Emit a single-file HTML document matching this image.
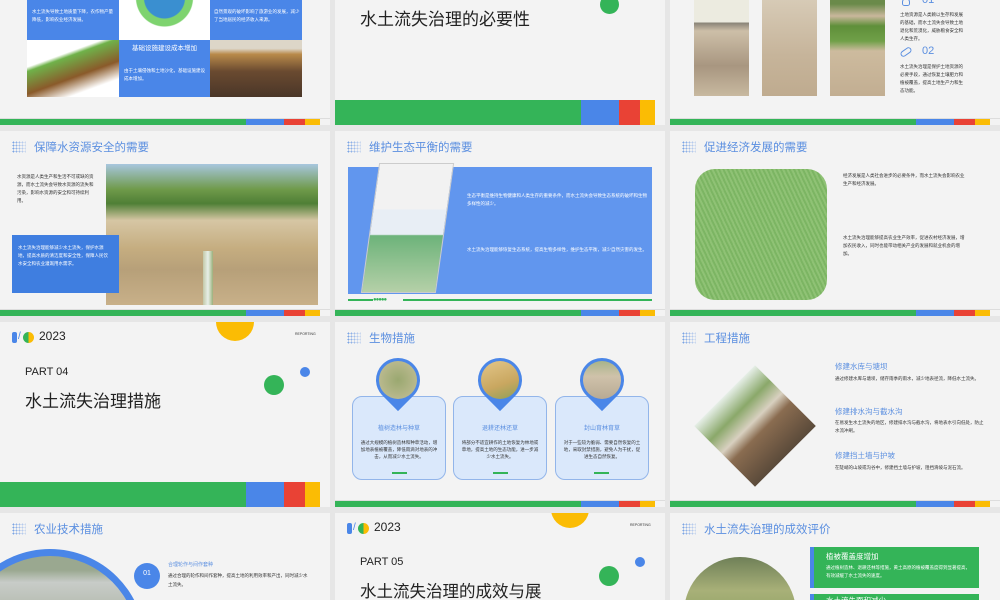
<!DOCTYPE html>
<html style="overflow:hidden;width:1000px;height:600px"><head><meta charset="utf-8"><style>
*{margin:0;padding:0;box-sizing:border-box}
body{width:1000px;height:600px;overflow:hidden;background:#e6e6e6;position:relative;font-family:"Liberation Sans","Noto Sans CJK SC",sans-serif}
.s{position:absolute;width:330px;height:185px;background:#f3f3f3;overflow:hidden}
.a{position:absolute}
.bar{position:absolute;left:0;bottom:0;width:330px;height:7px;border-top:1px solid #ddd}
.bar i{position:absolute;top:0;bottom:0}
.g{background:#34b458}.b{background:#4a86e8}.r{background:#e94235}.y{background:#fbbc04}
.thick{height:25px;border:0}
.hd{position:absolute;left:12px;top:9px;height:14px;display:flex;align-items:center}
.dots{width:14px;height:12px;background-image:radial-gradient(circle,#5b8fe0 45%,transparent 50%);background-size:3px 3px;opacity:.85;-webkit-mask:linear-gradient(90deg,#000,rgba(0,0,0,.3))}
.hd span{margin-left:8px;color:#5b8fe0;font-size:11.5px}
.t{font-size:4.5px;line-height:8px;color:#333}
.w{color:#fff}
</style></head><body>

<!-- Row1 col1 -->
<div class="s" style="left:0;top:-60px">
 <div class="a b" style="left:27px;top:40px;width:92px;height:60px"></div>
 <div class="a t w" style="left:32px;top:68px;width:84px">水土流失导致土地质量下降，农作物产量降低，影响农业经济发展。</div>
 <div class="a" style="left:119px;top:40px;width:91px;height:60px;background:radial-gradient(circle at 50% 30%,#3a8fd0 0 20px,#7ed36f 21px 28px,#fff 29px)"></div>
 <div class="a b" style="left:210px;top:40px;width:92px;height:60px"></div>
 <div class="a t w" style="left:214px;top:68px;width:86px">自然景观的破坏影响了旅游业的发展，减少了当地居民的经济收入来源。</div>
 <div class="a" style="left:27px;top:100px;width:92px;height:57px;background:linear-gradient(160deg,#fff 30%,#6fb24a 35%,#8a5a2a 60%,#fff 80%)"></div>
 <div class="a b" style="left:119px;top:100px;width:91px;height:57px"></div>
 <div class="a w" style="left:119px;top:102px;width:91px;text-align:center;font-size:6.5px">基础设施建设成本增加</div>
 <div class="a t w" style="left:124px;top:127px;width:84px">由于土壤侵蚀和土地沙化，基础设施建设成本增加。</div>
 <div class="a" style="left:210px;top:100px;width:92px;height:57px;background:linear-gradient(180deg,#ddd6c8 0 15%,#b98a4a 25%,#6a4a30 55%,#4a3628)"></div>
 <div class="bar"><i class="g" style="left:0;width:246px"></i><i class="b" style="left:246px;width:38px"></i><i class="r" style="left:284px;width:21px"></i><i class="y" style="left:305px;width:15px"></i></div>
</div>

<!-- Row1 col2 -->
<div class="s" style="left:335px;top:-60px">
 <div class="a" style="left:25px;top:65px;font-size:17px;color:#222">水土流失治理的必要性</div>
 <div class="a g" style="left:265px;top:55px;width:19px;height:19px;border-radius:50%"></div>
 <div class="bar thick"><i class="g" style="left:0;width:246px"></i><i class="b" style="left:246px;width:38px"></i><i class="r" style="left:284px;width:21px"></i><i class="y" style="left:305px;width:15px"></i></div>
</div>

<!-- Row1 col3 -->
<div class="s" style="left:670px;top:-60px">
 <div class="a" style="left:24px;top:56px;width:55px;height:100px;background:linear-gradient(180deg,#ecebe0 0 26%,#8a8478 27%,#cdbfa8 35%,#a89680 70%,#c8b9a0)"></div>
 <div class="a" style="left:92px;top:56px;width:55px;height:100px;background:linear-gradient(180deg,#d8ccb8,#c6b49a 60%,#bfab8f)"></div>
 <div class="a" style="left:160px;top:56px;width:55px;height:100px;background:linear-gradient(180deg,#6a8a4a 0 8%,#c9b79c 20%,#5f8f3a 30%,#70a048 45%,#cdbb9e 55%,#c2ae92)"></div>
 <div class="a" style="left:232px;top:58px;width:8px;height:8px;border:1.5px solid #5b8fe0;border-radius:50% 50% 30% 30%"></div>
 <div class="a" style="left:252px;top:54px;font-size:11px;color:#5b8fe0">01</div>
 <div class="a t" style="left:230px;top:71px;width:66px">土地资源是人类赖以生存和发展的基础，而水土流失会导致土地退化和荒漠化，威胁粮食安全和人类生存。</div>
 <div class="a" style="left:230px;top:109px;width:12px;height:6px;border:1.5px solid #5b8fe0;border-radius:3px;transform:rotate(-35deg)"></div>
 <div class="a" style="left:252px;top:105px;font-size:11px;color:#5b8fe0">02</div>
 <div class="a t" style="left:230px;top:123px;width:66px">水土流失治理是保护土地资源的必要手段，通过恢复土壤肥力和植被覆盖，提高土地生产力和生态功能。</div>
 <div class="bar"><i class="g" style="left:0;width:246px"></i><i class="b" style="left:246px;width:38px"></i><i class="r" style="left:284px;width:21px"></i><i class="y" style="left:305px;width:15px"></i></div>
</div>

<!-- Row2 col1 -->
<div class="s" style="left:0;top:131px">
 <div class="hd"><div class="dots"></div><span>保障水资源安全的需要</span></div>
 <div class="a t" style="left:17px;top:42px;width:77px">水资源是人类生产和生活不可或缺的资源，而水土流失会导致水资源的流失和污染，影响水资源的安全和可持续利用。</div>
 <div class="a" style="left:106px;top:33px;width:212px;height:141px;background:linear-gradient(180deg,#a7c6de 0,#6f9a4a 18%,#4f7f36 28%,#d6c6a4 40%,#c5ad80 60%,#b7a079 75%,#c8b089)"></div>
 <div class="a" style="left:203px;top:120px;width:10px;height:54px;background:linear-gradient(90deg,#c2c8a8,#e8efe8,#9ab07a)"></div>
 <div class="a b" style="left:12px;top:104px;width:107px;height:58px;background:#3f7ee0"></div>
 <div class="a t w" style="left:18px;top:113px;width:94px">水土流失治理能够减少水土流失，保护水源地，提高水质的清洁度和安全性，保障人民饮水安全和农业灌溉用水需求。</div>
 <div class="bar"><i class="g" style="left:0;width:246px"></i><i class="b" style="left:246px;width:38px"></i><i class="r" style="left:284px;width:21px"></i><i class="y" style="left:305px;width:15px"></i></div>
</div>

<!-- Row2 col2 -->
<div class="s" style="left:335px;top:131px">
 <div class="hd"><div class="dots"></div><span>维护生态平衡的需要</span></div>
 <div class="a" style="left:13px;top:36px;width:304px;height:127px;background:#6196ee"></div>
 <div class="a" style="left:35px;top:32px;width:75px;height:130px;background:linear-gradient(180deg,#f2f2f2 0 35%,#e8eef5 36% 55%,#6db37a 56%,#b5d0a8 100%);transform:skew(-8deg);border:1px solid #ccc"></div>
 <div class="a t w" style="left:132px;top:61px;width:180px">生态平衡是维持生物健康和人类生存的重要条件，而水土流失会导致生态系统的破坏和生物多样性的减少。</div>
 <div class="a t w" style="left:132px;top:115px;width:180px">水土流失治理能够恢复生态系统，提高生物多样性，维护生态平衡，减少自然灾害的发生。</div>
 <div class="a g" style="left:13px;top:168px;width:25px;height:2px"></div>
 <div class="a" style="left:38px;top:166px;font-size:6px;line-height:6px;color:#34b458;letter-spacing:-1px">●●●●●</div>
 <div class="a g" style="left:68px;top:168px;width:249px;height:2px"></div>
 <div class="bar"><i class="g" style="left:0;width:246px"></i><i class="b" style="left:246px;width:38px"></i><i class="r" style="left:284px;width:21px"></i><i class="y" style="left:305px;width:15px"></i></div>
</div>

<!-- Row2 col3 -->
<div class="s" style="left:670px;top:131px">
 <div class="hd"><div class="dots"></div><span>促进经济发展的需要</span></div>
 <div class="a" style="left:25px;top:38px;width:132px;height:131px;border-radius:20px;background:repeating-linear-gradient(65deg,#7cb563 0 2px,#8fc275 2px 4px)"></div>
 <div class="a t" style="left:173px;top:41px;width:125px">经济发展是人类社会进步的必要条件，而水土流失会影响农业生产和经济发展。</div>
 <div class="a t" style="left:173px;top:103px;width:125px">水土流失治理能够提高农业生产效率，促进农村经济发展，增加农民收入，同时也能带动相关产业的发展和就业机会的增加。</div>
 <div class="bar"><i class="g" style="left:0;width:246px"></i><i class="b" style="left:246px;width:38px"></i><i class="r" style="left:284px;width:21px"></i><i class="y" style="left:305px;width:15px"></i></div>
</div>

<!-- Row3 col1 -->
<div class="s" style="left:0;top:322px">
 <div class="a b" style="left:12px;top:10px;width:5px;height:11px;border-radius:2px"></div>
 <div class="a" style="left:18px;top:9px;font-size:10px;color:#4a86e8">/</div>
 <div class="a" style="left:23px;top:10px;width:11px;height:11px;border-radius:50%;background:linear-gradient(90deg,#34b458 50%,#fbbc04 50%)"></div>
 <div class="a" style="left:39px;top:7px;font-size:12px;color:#222">2023</div>
 <div class="a y" style="left:216px;top:-19px;width:38px;height:38px;border-radius:50%"></div>
 <div class="a" style="left:295px;top:10px;font-size:3.5px;color:#333">REPORTING</div>
 <div class="a" style="left:25px;top:44px;font-size:11px;color:#222">PART 04</div>
 <div class="a" style="left:25px;top:65px;font-size:17px;color:#222">水土流失治理措施</div>
 <div class="a g" style="left:264px;top:53px;width:20px;height:20px;border-radius:50%"></div>
 <div class="a b" style="left:300px;top:45px;width:10px;height:10px;border-radius:50%"></div>
 <div class="bar thick"><i class="g" style="left:0;width:246px"></i><i class="b" style="left:246px;width:38px"></i><i class="r" style="left:284px;width:21px"></i><i class="y" style="left:305px;width:15px"></i></div>
</div>

<!-- Row3 col2 -->
<div class="s" style="left:335px;top:322px">
 <div class="hd"><div class="dots"></div><span>生物措施</span></div>
 <div class="a" style="left:17px;top:74px;width:94px;height:84px;background:#dae8fb;border:1px solid #92b5ea;border-radius:10px"></div>
 <div class="a" style="left:118px;top:74px;width:94px;height:84px;background:#dae8fb;border:1px solid #92b5ea;border-radius:10px"></div>
 <div class="a" style="left:220px;top:74px;width:94px;height:84px;background:#dae8fb;border:1px solid #92b5ea;border-radius:10px"></div>
 <div class="a" style="left:41px;top:36px;width:44px;height:44px;border-radius:50% 50% 0 50%;transform:rotate(45deg);background:#4a86e8"></div>
 <div class="a" style="left:44px;top:39px;width:38px;height:38px;border-radius:50%;background:radial-gradient(circle,#9aa870,#c6c09a)"></div>
 <div class="a" style="left:143px;top:36px;width:44px;height:44px;border-radius:50% 50% 0 50%;transform:rotate(45deg);background:#4a86e8"></div>
 <div class="a" style="left:146px;top:39px;width:38px;height:38px;border-radius:50%;background:linear-gradient(160deg,#e3c689,#c9a760 60%,#8fa058)"></div>
 <div class="a" style="left:245px;top:36px;width:44px;height:44px;border-radius:50% 50% 0 50%;transform:rotate(45deg);background:#4a86e8"></div>
 <div class="a" style="left:248px;top:39px;width:38px;height:38px;border-radius:50%;background:linear-gradient(180deg,#a8b48a,#cfc2aa 40%,#b8aa94)"></div>
 <div class="a" style="left:17px;top:101px;width:94px;text-align:center;font-size:6px;color:#5b8fe0">植树造林与种草</div>
 <div class="a" style="left:118px;top:101px;width:94px;text-align:center;font-size:6px;color:#5b8fe0">退耕还林还草</div>
 <div class="a" style="left:220px;top:101px;width:94px;text-align:center;font-size:6px;color:#5b8fe0">封山育林育草</div>
 <div class="a t" style="left:25px;top:117px;width:78px;text-align:center;line-height:7px">通过大规模的植树造林和种草活动，增加地表植被覆盖，降低雨滴对地表的冲击，从而减少水土流失。</div>
 <div class="a t" style="left:126px;top:117px;width:78px;text-align:center;line-height:7px">将部分不适宜耕作的土地恢复为林地或草地，提高土地的生态功能，进一步减少水土流失。</div>
 <div class="a t" style="left:228px;top:117px;width:78px;text-align:center;line-height:7px">对于一些较为脆弱、需要自然恢复的土地，采取封禁措施，避免人为干扰，促进生态自然恢复。</div>
 <div class="a g" style="left:57px;top:150px;width:15px;height:2px"></div>
 <div class="a g" style="left:158px;top:150px;width:15px;height:2px"></div>
 <div class="a g" style="left:259px;top:150px;width:15px;height:2px"></div>
 <div class="bar"><i class="g" style="left:0;width:246px"></i><i class="b" style="left:246px;width:38px"></i><i class="r" style="left:284px;width:21px"></i><i class="y" style="left:305px;width:15px"></i></div>
</div>

<!-- Row3 col3 -->
<div class="s" style="left:670px;top:322px">
 <div class="hd"><div class="dots"></div><span>工程措施</span></div>
 <div class="a" style="left:42px;top:61px;width:86px;height:86px;transform:rotate(45deg);background:linear-gradient(90deg,#e6efe8 0,#8aa86a 25%,#d8d0c0 45%,#8a6c50 60%,#5a4a3a 100%)"></div>
 <div class="a" style="left:165px;top:39px;font-size:7.5px;color:#5b8fe0">修建水库与塘坝</div>
 <div class="a t" style="left:165px;top:53px;width:145px;line-height:7.5px">通过修建水库与塘坝，储存雨季的雨水，减少地表径流，降低水土流失。</div>
 <div class="a" style="left:165px;top:84px;font-size:7.5px;color:#5b8fe0">修建排水沟与截水沟</div>
 <div class="a t" style="left:165px;top:97px;width:150px;line-height:7.5px">在易发生水土流失的地区，修建排水沟与截水沟，将地表水引向低处，防止水流冲刷。</div>
 <div class="a" style="left:165px;top:128px;font-size:7.5px;color:#5b8fe0">修建挡土墙与护坡</div>
 <div class="a t" style="left:165px;top:142px;width:150px">在陡峭的山坡或沟谷中，修建挡土墙与护坡，阻挡滑坡与泥石流。</div>
 <div class="bar"><i class="g" style="left:0;width:246px"></i><i class="b" style="left:246px;width:38px"></i><i class="r" style="left:284px;width:21px"></i><i class="y" style="left:305px;width:15px"></i></div>
</div>

<!-- Row4 col1 -->
<div class="s" style="left:0;top:513px;height:87px">
 <div class="hd"><div class="dots"></div><span>农业技术措施</span></div>
 <div class="a" style="left:-45px;top:36px;width:190px;height:190px;border-radius:50%;background:#4a86e8"></div>
 <div class="a" style="left:-38px;top:43px;width:176px;height:176px;border-radius:50%;background:linear-gradient(180deg,#9aa890 0 8%,#c8ccc8 15%,#a8b0a0 40%,#6f8a58)"></div>
 <div class="a b" style="left:134px;top:50px;width:26px;height:26px;border-radius:50%"></div>
 <div class="a w" style="left:134px;top:57px;width:26px;text-align:center;font-size:7px">01</div>
 <div class="a" style="left:168px;top:48px;font-size:5px;color:#5b8fe0">合理轮作与间作套种</div>
 <div class="a t" style="left:168px;top:58px;width:142px;line-height:9px">通过合理的轮作和间作套种，提高土地的利用效率和产出，同时减少水土流失。</div>
</div>

<!-- Row4 col2 -->
<div class="s" style="left:335px;top:513px;height:87px">
 <div class="a b" style="left:12px;top:10px;width:5px;height:11px;border-radius:2px"></div>
 <div class="a" style="left:18px;top:9px;font-size:10px;color:#4a86e8">/</div>
 <div class="a" style="left:23px;top:10px;width:11px;height:11px;border-radius:50%;background:linear-gradient(90deg,#34b458 50%,#fbbc04 50%)"></div>
 <div class="a" style="left:39px;top:7px;font-size:12px;color:#222">2023</div>
 <div class="a y" style="left:216px;top:-23px;width:38px;height:38px;border-radius:50%"></div>
 <div class="a" style="left:295px;top:10px;font-size:3.5px;color:#333">REPORTING</div>
 <div class="a" style="left:25px;top:43px;font-size:11px;color:#222">PART 05</div>
 <div class="a" style="left:25px;top:65px;font-size:16.5px;color:#222;white-space:nowrap">水土流失治理的成效与展</div>
 <div class="a g" style="left:264px;top:53px;width:20px;height:20px;border-radius:50%"></div>
 <div class="a b" style="left:300px;top:44px;width:10px;height:10px;border-radius:50%"></div>
</div>

<!-- Row4 col3 -->
<div class="s" style="left:670px;top:513px;height:87px">
 <div class="hd"><div class="dots"></div><span>水土流失治理的成效评价</span></div>
 <div class="a" style="left:14px;top:44px;width:112px;height:112px;border-radius:50%;background:linear-gradient(180deg,#6f8058,#a8b078 30%,#8aa060 60%,#b0a888)"></div>
 <div class="a g" style="left:140px;top:34px;width:169px;height:41px;border-left:4px solid #4a86e8"></div>
 <div class="a w" style="left:156px;top:38px;font-size:7.5px">植被覆盖度增加</div>
 <div class="a t w" style="left:156px;top:51px;width:148px;line-height:7.5px">通过植树造林、退耕还林等措施，黄土高原的植被覆盖度得到显著提高，有效减缓了水土流失的速度。</div>
 <div class="a g" style="left:140px;top:81px;width:169px;height:41px;border-left:4px solid #4a86e8"></div>
 <div class="a w" style="left:156px;top:82px;font-size:7.5px">水土流失面积减少</div>
</div>
</body></html>
